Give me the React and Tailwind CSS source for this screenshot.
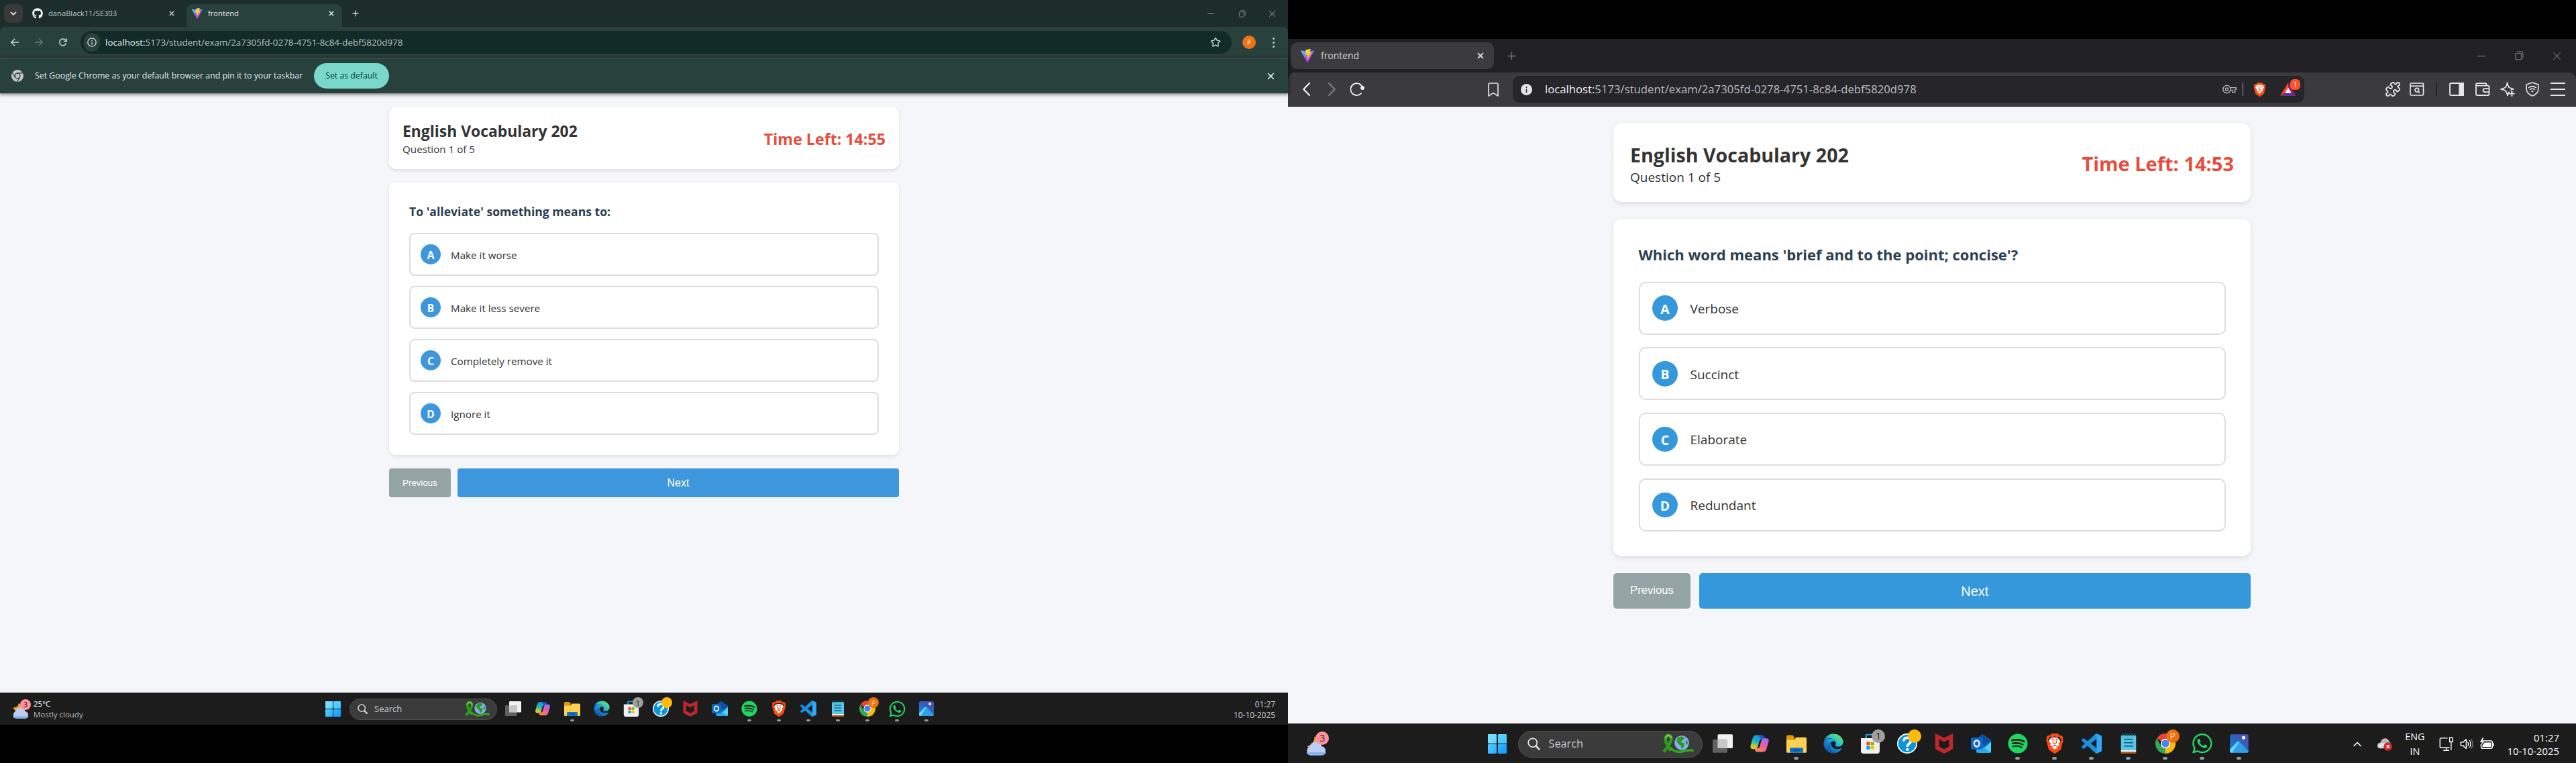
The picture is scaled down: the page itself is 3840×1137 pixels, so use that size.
import React from "react";
import { FaGithub, FaEdge, FaWhatsapp, FaSpotify } from "react-icons/fa";
import { SiBrave } from "react-icons/si";
import { Star, Puzzle, ChevronUp } from "lucide-react";

/* ---------- shared glyphs ---------- */

function Cross({ className = "", w = 1.6 }) {
  return (
    <svg viewBox="0 0 12 12" className={className} fill="none" stroke="currentColor" strokeWidth={w}>
      <path d="M1.2 1.2 10.8 10.8M10.8 1.2 1.2 10.8" />
    </svg>
  );
}

function Plus({ className = "", w = 1.6 }) {
  return (
    <svg viewBox="0 0 12 12" className={className} fill="none" stroke="currentColor" strokeWidth={w}>
      <path d="M6 0.5V11.5M0.5 6H11.5" />
    </svg>
  );
}

function Restore({ className = "" }) {
  return (
    <svg viewBox="0 0 12 12" className={className} fill="none" stroke="currentColor" strokeWidth="1">
      <rect x="1.5" y="3" width="7.5" height="8" rx="1" />
      <path d="M3.5 1H9.5Q11 1 11 2.5V9" />
    </svg>
  );
}

function ViteLogo({ className = "", id }) {
  return (
    <svg viewBox="0 0 256 257" className={className}>
      <defs>
        <linearGradient id={id + "a"} x1="-.828%" x2="57.636%" y1="7.652%" y2="78.411%">
          <stop offset="0%" stopColor="#41D1FF" />
          <stop offset="100%" stopColor="#BD34FE" />
        </linearGradient>
        <linearGradient id={id + "b"} x1="43.376%" x2="50.316%" y1="2.242%" y2="89.03%">
          <stop offset="0%" stopColor="#FFEA83" />
          <stop offset="8.333%" stopColor="#FFDD35" />
          <stop offset="100%" stopColor="#FFA800" />
        </linearGradient>
      </defs>
      <path fill={`url(#${id}a)`} d="M255.153 37.938L134.897 252.976c-2.483 4.44-8.862 4.466-11.382.048L.875 37.958c-2.746-4.814 1.371-10.646 6.827-9.67l120.385 21.517a6.537 6.537 0 0 0 2.322-.004l117.867-21.483c5.438-.991 9.574 4.796 6.877 9.62Z" />
      <path fill={`url(#${id}b)`} d="M185.432.063L96.44 17.501a3.268 3.268 0 0 0-2.634 3.014l-5.474 92.456a3.268 3.268 0 0 0 3.997 3.378l24.777-5.718c2.318-.535 4.413 1.507 3.936 3.838l-7.361 36.047c-.495 2.426 1.782 4.5 4.151 3.78l15.304-4.649c2.372-.72 4.652 1.36 4.15 3.788l-11.698 56.621c-.732 3.542 3.979 5.473 5.943 2.437l1.313-2.028l72.516-144.72c1.215-2.423-.88-5.186-3.54-4.672l-25.505 4.922c-2.396.462-4.435-1.77-3.759-4.114l16.646-57.705c.677-2.35-1.37-4.583-3.769-4.113Z" />
    </svg>
  );
}

function BraveLion({ className = "" }) {
  return (
    <span className={"relative block " + className}>
      <span className="absolute inset-x-[21%] top-[20%] bottom-[18%] rounded-[35%] bg-white" />
      <SiBrave className="relative block h-full w-full text-[#fb4a12]" />
    </span>
  );
}

/* ---------- Chrome window (left display) ---------- */

function ChromeTabs() {
  return (
    <div className="flex h-10 bg-[#1d2d2b] text-[#c3d0cd]">
      <div className="mt-1.5 ml-1.5 flex h-7 w-7 items-center justify-center rounded-lg bg-[#373a39] text-[#e3e3e3]">
        <svg viewBox="0 0 10 6" className="h-1.5 w-2.5" fill="none" stroke="currentColor" strokeWidth="1.9">
          <path d="M1 .8 5 4.8 9 .8" />
        </svg>
      </div>
      <div className="ml-3.5 flex h-10 w-[230px] items-center">
        <FaGithub className="h-4 w-4 text-white" />
        <span className="ml-2 w-[180px] text-[11.2px] whitespace-nowrap text-[#b9c8c5]">danaBlack11/SE303</span>
        <Cross className="h-2 w-2" w={2.2} />
      </div>
      <div className="mt-1.5 flex h-[34px] w-[232px] items-center rounded-t-[10px] bg-[#29413d] pb-1.5 text-[#e4eae9]">
        <ViteLogo id="vl" className="ml-2 h-4 w-4" />
        <span className="ml-2 w-[180px] text-[11.2px] whitespace-nowrap">frontend</span>
        <Cross className="h-2 w-2" w={2.2} />
      </div>
      <div className="ml-[15px] flex flex-1 items-center">
        <Plus className="h-2.5 w-2.5" w={1.8} />
      </div>
      <div className="flex items-center text-[#7f8a88]">
        <div className="h-px w-2.5 bg-[#7f8a88]" />
        <Restore className="ml-9 h-[11px] w-[11px]" />
        <Cross className="mr-[18px] ml-[34px] h-[11px] w-[11px]" w={1.1} />
      </div>
    </div>
  );
}

function ChromeToolbar() {
  return (
    <div className="bg-[#1d2d2b]">
      <div className="flex h-[46px] items-center rounded-t-lg bg-[#29413d] text-[#c3d6d2]">
        <svg viewBox="0 0 12 12" className="ml-4 h-3 w-3" fill="none" stroke="currentColor" strokeWidth="1.5">
          <path d="M12 6H1M6.2.7.9 6l5.3 5.3" />
        </svg>
        <svg viewBox="0 0 12 12" className="ml-6 h-3 w-3 text-[#667a76]" fill="none" stroke="currentColor" strokeWidth="1.5">
          <path d="M0 6H11M5.8.7 11.1 6l-5.3 5.3" />
        </svg>
        <svg viewBox="0 0 12 12" className="ml-6 h-3 w-3" fill="none" stroke="currentColor" strokeWidth="1.5">
          <path d="M10.6 7.2A5 5 0 1 1 9.7 2.8L11 4.4M11.2.2V4.6H6.8" />
        </svg>
        <div className="ml-5 flex h-[34px] w-[1716px] items-center rounded-full bg-[#122a28]">
          <div className="ml-[5px] flex h-7 w-6 items-center justify-center rounded-full bg-[#29413d]">
            <svg viewBox="0 0 14 14" className="h-3.5 w-3.5 text-[#d5dfdd]" fill="none" stroke="currentColor" strokeWidth="1.3">
              <circle cx="7" cy="7" r="6.2" />
              <path d="M7 6.2V10.4M7 3.6V5" />
            </svg>
          </div>
          <span className="ml-2 flex-1 text-[13.38px] whitespace-nowrap text-[#b7c5c2]">
            <span className="text-[#eef3f2]">localhost:</span>5173/student/exam/2a7305fd-0278-4751-8c84-debf5820d978
          </span>
          <Star className="mr-4 h-4 w-4 text-[#d0dcda]" strokeWidth={2} />
        </div>
        <div className="ml-4 flex h-5 w-5 items-center justify-center rounded-full bg-[#ee7216] text-[10px] text-white">P</div>
        <div className="ml-[25px] flex flex-col gap-[3px]">
          <i className="h-[3px] w-[3px] rounded-full bg-[#c3d6d2]" />
          <i className="h-[3px] w-[3px] rounded-full bg-[#c3d6d2]" />
          <i className="h-[3px] w-[3px] rounded-full bg-[#c3d6d2]" />
        </div>
      </div>
    </div>
  );
}

function ChromeInfobar() {
  return (
    <div className="relative flex h-[53px] items-center border-t border-[#4b5553] bg-[#29413d] shadow-[0_1px_5px_1px_rgba(0,0,0,0.5)]">
      <svg viewBox="0 0 18 18" className="ml-[17px] h-[18px] w-[18px]">
        <circle cx="9" cy="9" r="9" fill="#c6c9c8" />
        <circle cx="9" cy="9" r="3.9" fill="#c6c9c8" stroke="#29413d" strokeWidth="1.4" />
        <path d="M9 4.9H17.2M5.4 11 1.3 4M12.6 11 8.5 18" stroke="#29413d" strokeWidth="1.4" />
      </svg>
      <span className="ml-[17px] w-[416px] text-[12.35px] whitespace-nowrap text-[#e4eae9]">
        Set Google Chrome as your default browser and pin it to your taskbar
      </span>
      <div className="flex h-[38px] w-28 items-center justify-center rounded-full bg-[#79d8ca] text-[12.3px] whitespace-nowrap text-[#06403a]">
        Set as default
      </div>
      <Cross className="mr-5 ml-auto h-[11px] w-[11px] text-[#d5dfdd]" w={1.8} />
    </div>
  );
}

/* ---------- Brave window (right display) ---------- */

function BraveTabs() {
  return (
    <div className="flex h-[50px] items-center bg-[#202025]">
      <div className="ml-1 flex h-10 w-[303px] items-center rounded-[10px] bg-[#3b3a3f] text-[#d4d4d6]">
        <ViteLogo id="vr" className="ml-[15px] h-5 w-5" />
        <span className="ml-2.5 flex-1 text-[13.9px]">frontend</span>
        <Cross className="mr-[15px] h-2.5 w-2.5" w={2.2} />
      </div>
      <Plus className="ml-5 h-[13px] w-[13px] text-[#77777b]" w={1.2} />
      <div className="ml-auto h-px w-[13px] bg-[#8a8a8d]" />
      <Restore className="ml-[43px] h-[14px] w-[14px] text-[#77777b]" />
      <Cross className="mr-[22px] ml-[43px] h-[13px] w-[13px] text-[#6b6b6f]" w={1} />
    </div>
  );
}

function BraveToolbar() {
  return (
    <div className="bg-[#202025]">
      <div className="flex h-[51px] items-center rounded-t-[10px] border-b border-[#2b2a2f] bg-[#3b3a3f] text-[#e6e6e8]">
        <svg viewBox="0 0 11 20" className="ml-[22px] h-5 w-[11px]" fill="none" stroke="#fff" strokeWidth="1.9" strokeLinecap="round" strokeLinejoin="round">
          <path d="M10 1 1.2 10 10 19" />
        </svg>
        <svg viewBox="0 0 11 20" className="ml-[27px] h-5 w-[11px]" fill="none" stroke="#828186" strokeWidth="1.9" strokeLinecap="round" strokeLinejoin="round">
          <path d="M1 1 9.8 10 1 19" />
        </svg>
        <svg viewBox="0 0 22 20" className="ml-[21px] h-5 w-[22px]" fill="none" stroke="#f3f3f4" strokeWidth="1.8" strokeLinecap="round">
          <path d="M19 7.5A9 9 0 1 0 17 16.2" />
          <circle cx="19" cy="8" r="2" fill="#fff" />
        </svg>
        <svg viewBox="0 0 16 21" className="ml-[184px] h-[21px] w-4" fill="none" stroke="#dedee0" strokeWidth="1.7" strokeLinejoin="round">
          <path d="M1 3Q1 1 3 1H13Q15 1 15 3V20L8 15.5 1 20Z" />
        </svg>
        <div className="ml-[21px] flex h-10 w-[1180px] items-center rounded-[10px] bg-[#26252a]">
          <svg viewBox="0 0 17 17" className="ml-3 h-[17px] w-[17px]">
            <circle cx="8.5" cy="8.5" r="8.5" fill="#e4e4e6" />
            <path d="M8.5 7.5V13M8.5 4V6" stroke="#3b3a3f" strokeWidth="1.7" />
          </svg>
          <span className="ml-[19px] flex-1 text-[16.72px] whitespace-nowrap text-[#bdbdc1]">
            <span className="text-[#f2f2f3]">localhost:</span>5173/student/exam/2a7305fd-0278-4751-8c84-debf5820d978
          </span>
          <svg viewBox="0 0 21 14" className="h-3.5 w-[21px]" fill="none" stroke="#b9b9bd" strokeWidth="1.4">
            <circle cx="6.5" cy="7" r="5.6" />
            <circle cx="6.5" cy="7" r="2" />
            <path d="M11.6 4.6H20.2V7.6H18.6V11.6H15.2V8.6H12" />
          </svg>
          <div className="ml-[9px] h-5 w-px bg-[#a4a4a8]" />
          <BraveLion className="ml-[14px] h-[23px] w-[21px]" />
          <div className="relative mr-3 ml-5 h-5 w-6">
            <svg viewBox="0 0 24 20" className="h-5 w-6">
              <path d="M12 0 0 20 12 12Z" fill="#ff4724" />
              <path d="M12 0 24 20 12 12Z" fill="#9e1f63" />
              <path d="M0 20H24L12 12Z" fill="#662d91" />
              <path d="M12 7.5 16.8 15.6H7.2Z" fill="#fff" />
            </svg>
            <span className="absolute -top-[5px] left-[15px] flex h-4 w-[15px] items-center justify-center rounded-[6px] bg-[#fb542b] text-[10px] text-white">1</span>
          </div>
        </div>
        <Puzzle className="ml-[120px] h-6 w-6" strokeWidth={1.8} />
        <svg viewBox="0 0 22 20" className="ml-[13px] h-5 w-[22px]" fill="none" stroke="currentColor" strokeWidth="1.7">
          <rect x="1" y="1" width="19.5" height="18" rx="1.5" />
          <path d="M1 5.2H20.5" />
          <circle cx="10.8" cy="11.2" r="2.8" />
          <path d="M12.8 13.2 15 15.5" />
        </svg>
        <div className="ml-[17px] h-5 w-0.5 bg-[#202025]" />
        <svg viewBox="0 0 22 20" className="ml-[18px] h-5 w-[22px]" fill="none" stroke="currentColor" strokeWidth="1.8">
          <rect x="1" y="1" width="20" height="18" rx="1.5" />
          <path d="M15.2 1H21V19H15.2Z" fill="currentColor" />
        </svg>
        <svg viewBox="0 0 22 20" className="ml-[17px] h-5 w-[22px]" fill="none" stroke="currentColor" strokeWidth="1.8" strokeLinejoin="round">
          <path d="M16.5 4.2V3Q16.5 1.2 14.5 1.2H3Q1 1.2 1 3V17Q1 19 3 19H18.5Q20.5 19 20.5 17V6.2Q20.5 4.6 18.5 4.6H1" />
          <path d="M20.8 9.2H14Q11.6 9.2 11.6 11.6T14 14.2H20.8" />
        </svg>
        <svg viewBox="0 0 22 22" className="ml-[15px] h-[22px] w-[22px]" fill="none" stroke="currentColor" strokeWidth="1.7" strokeLinejoin="round" strokeLinecap="round">
          <path d="M13.2 15.2Q12 17 11 20.5 9.6 15 8 13.4 6 11.8 1 10.8 6 9.8 8 8.2 9.6 6.6 10.6 1.2 11.8 6.6 13.2 8.2 15 9.8 20 10.8 17.6 11.4 16.4 12" />
          <path d="M17.4 14.2V21M14 17.6H20.8" strokeWidth="2" />
        </svg>
        <svg viewBox="0 0 20 22" className="ml-4 h-[22px] w-5" fill="none" stroke="currentColor" strokeWidth="1.6" strokeLinejoin="round" strokeLinecap="round">
          <path d="M10 1 18.8 4V11Q18.8 17.5 10 21 1.2 17.5 1.2 11V4Z" />
          <path d="M4.6 8.6Q10 4.6 15.4 8.6M6.6 11.4Q10 9 13.4 11.4" />
          <circle cx="10" cy="14.2" r="1.3" fill="currentColor" stroke="none" />
        </svg>
        <div className="ml-[17px] flex w-[22px] flex-col gap-[7px]">
          <i className="h-0.5 bg-[#e6e6e8]" />
          <i className="h-0.5 bg-[#e6e6e8]" />
          <i className="h-0.5 bg-[#e6e6e8]" />
        </div>
      </div>
    </div>
  );
}

/* ---------- Exam page ---------- */

function Exam({ time, question, options, blue }) {
  return (
    <div className="mx-auto flex w-[760px] flex-col gap-5 pt-5 text-[#333]">
      <div className="flex h-[93.4px] items-center justify-between rounded-[10px] bg-white px-5 shadow-[0_2px_5px_rgba(0,0,0,0.1)]">
        <div className="pt-0.5">
          <h2 className="text-[22.9px] leading-8 font-bold whitespace-nowrap">English Vocabulary 202</h2>
          <p className="text-[15.2px] leading-[21px] whitespace-nowrap">Question 1 of 5</p>
        </div>
        <div className="pt-[3px] text-[23.2px] leading-8 font-bold whitespace-nowrap text-[#e74c3c]">Time Left: {time}</div>
      </div>
      <div className="rounded-[10px] bg-white p-[30px] shadow-[0_2px_5px_rgba(0,0,0,0.1)]">
        <h3 className="h-[45px] text-[17.6px] leading-[26px] font-bold whitespace-nowrap text-[#2c3e50]">{question}</h3>
        <div className="flex flex-col gap-[15px]">
          {options.map((text, i) => (
            <div key={text} className="flex items-center rounded-lg border-2 border-[#ddd] p-[15px]">
              <span className={"flex h-[30px] w-[30px] items-center justify-center rounded-full pt-0.5 text-[15.5px] leading-none font-bold text-white " + blue}>
                {"ABCD"[i]}
              </span>
              <span className="ml-[15px] pt-0.5 text-[15.2px] leading-none whitespace-nowrap">{text}</span>
            </div>
          ))}
        </div>
      </div>
      <div className="flex h-[42.4px] gap-2.5 font-['Liberation_Sans',sans-serif] text-white">
        <button className="w-[92px] rounded-[4px] bg-[#95a5a6] text-[13.33px]">Previous</button>
        <button className={"flex-1 rounded-[4px] text-base " + blue}>Next</button>
      </div>
    </div>
  );
}

/* ---------- Windows taskbar ---------- */

const Badge = ({ className, children }) => (
  <span className={"absolute flex h-4 w-4 items-center justify-center rounded-full text-[11px] leading-none " + className}>{children}</span>
);

function Weather({ night }) {
  return (
    <div className="relative h-7 w-7 shrink-0">
      <svg viewBox="0 0 28 28" className="h-7 w-7">
        <path d={night ? "M11 5Q11 14 2 17 5 20 13 19L15 8Z" : "M10 5 8 10 1 12 5 16 3 20 14 18 14 8Z"} fill="#f5a623" />
        <path d="M6 27.5A5.5 5.5 0 0 1 5 17.2 7.6 7.6 0 0 1 19.6 17 5.4 5.4 0 0 1 20 27.5Z" fill="#b9cdf5" />
        <path d="M6 27.5A5 5 0 0 1 1.2 24H24.6A5 5 0 0 1 20 27.5Z" fill="#8fb0ea" />
      </svg>
      <Badge className="-top-px left-[12px] bg-[#ff929a] text-[#3a1416]">3</Badge>
    </div>
  );
}

function WindowsLogo() {
  return (
    <div className="grid h-[23px] w-[23px] shrink-0 grid-cols-2 gap-px">
      <i className="rounded-[1px] bg-linear-to-br from-[#80e4ff] to-[#5bd3ff]" />
      <i className="rounded-[1px] bg-linear-to-br from-[#5ed8ff] to-[#3cc0ff]" />
      <i className="rounded-[1px] bg-linear-to-br from-[#52cdff] to-[#26adff]" />
      <i className="rounded-[1px] bg-linear-to-br from-[#36baff] to-[#0a93fb]" />
    </div>
  );
}

function SearchPill() {
  return (
    <div className="ml-[13px] flex h-8 w-[220px] shrink-0 items-center rounded-full border border-[#525252] bg-[#3b3b3b]">
      <svg viewBox="0 0 15 15" className="ml-[11px] h-[15px] w-[15px]" fill="none" stroke="#e2e2e2" strokeLinecap="round">
        <circle cx="6.2" cy="6.2" r="5.2" strokeWidth="1.4" />
        <path d="M10.2 10.2 14 14" strokeWidth="2" />
      </svg>
      <span className="ml-[10px] text-[13px] text-[#c9c9c9]">Search</span>
      <svg viewBox="0 0 40 23" className="mr-2 ml-auto h-[23px] w-10" fill="none">
        <path d="M11 20Q4 10 4.6 5 5.6 1.2 8 1.2T11.6 5Q11 12 2.4 21" stroke="#2c9d1c" strokeWidth="3.6" />
        <path d="M11.6 5Q10.6 1.4 8 1.4T4.6 5" stroke="#6cc83a" strokeWidth="2.4" />
        <path d="M10 16Q17 23 25 20.5T38 20" stroke="#33a51d" strokeWidth="3" />
        <circle cx="24" cy="10.3" r="8.6" fill="#86aef2" />
        <path d="M19.5 4Q24.5 1.5 27.5 4L25.5 7 22.5 8.5 24.5 10 27.5 11 26.5 15 24 18 22.9 14 19.5 11 17.5 8Z" fill="#2a9a20" />
        <path d="M28.5 7 31.5 9 30.5 13 28.9 11Z" fill="#2a9a20" />
      </svg>
    </div>
  );
}

function TaskIcons({ id }) {
  const cls = "h-6 w-6";
  const icons = [
    <svg viewBox="0 0 24 24" className={cls}>
      <rect x="6" y="1" width="18" height="16.5" rx="1.2" fill="#f1f1f1" />
      <rect x="0" y="7" width="17.5" height="16" rx="1.2" fill="#777" fillOpacity="0.75" />
      <rect x="6" y="7" width="11.5" height="10.5" fill="#c8c8c8" />
    </svg>,
    <svg viewBox="0 0 24 24" className={cls}>
      <defs>
        <linearGradient id={id + "c1"} x1="0.5" y1="0" x2="0.2" y2="1">
          <stop offset="0" stopColor="#1a8fe8" /><stop offset="0.45" stopColor="#1bb6c9" /><stop offset="0.75" stopColor="#9fcf45" /><stop offset="1" stopColor="#f9c21c" />
        </linearGradient>
        <linearGradient id={id + "c2"} x1="0.8" y1="0" x2="0.2" y2="1">
          <stop offset="0" stopColor="#9a6bff" /><stop offset="0.5" stopColor="#ef5c9c" /><stop offset="1" stopColor="#ff8c4a" />
        </linearGradient>
      </defs>
      <path d="M8 2H15Q17 2 17.6 4L18.3 6.5H15Q12.5 6.5 11.8 9L9.6 16.5Q9 18.5 7 18.5H4Q.5 18.5 1.2 14.5L3.6 6Q4.8 2 8 2Z" fill={`url(#${id}c1)`} />
      <path d="M11 2H15Q17 2 17.6 4L18.3 6.5H14Q12.5 6 11 2Z" fill="#1554c8" />
      <path d="M16 22H9.4Q7.2 22 6.6 20L6 17.8H9Q11.5 17.8 12.2 15.2L14.4 7.6Q15 5.8 17 5.8H20Q23.5 5.8 22.8 9.6L20.4 18Q19.2 22 16 22Z" fill={`url(#${id}c2)`} />
    </svg>,
    <svg viewBox="0 0 24 24" className={cls}>
      <path d="M0 4Q0 2 1.5 2H7.5L9.5 4.5V8H0Z" fill="#dd9a05" />
      <path d="M0 7.5 9.5 7.5 11.5 4.5H22.5Q24 4.5 24 6V21.5Q24 23 22.5 23H1.5Q0 23 0 21.5Z" fill="#fdd04f" />
      <path d="M4 23V18.5Q4 17 5.5 17H18.5Q20 17 20 18.5V23Z" fill="#1173c6" />
      <rect x="8" y="19.2" width="8" height="1.5" rx=".7" fill="#0a4d93" />
    </svg>,
    <FaEdge className={cls} fill={`url(#${id}edge)`} />,
    <svg viewBox="0 0 24 24" className={cls}>
      <path d="M7 6V2.2Q7 1.4 7.8 1.4H16.2Q17 1.4 17 2.2V6" fill="none" stroke="#1ea0ea" strokeWidth="1.7" />
      <path d="M.8 5.5H23.2V21Q23.2 24 20 24H4Q.8 24 .8 21Z" fill="#f0f0f0" />
      <path d="M7.5 10H11.5V14H7.5Z" fill="#f25022" /><path d="M12.5 10H16.5V14H12.5Z" fill="#7fba00" />
      <path d="M7.5 15H11.5V19H7.5Z" fill="#00a4ef" /><path d="M12.5 15H16.5V19H12.5Z" fill="#ffb900" />
    </svg>,
    <svg viewBox="0 0 24 24" className={cls}>
      <circle cx="12" cy="12" r="11.3" fill="#0a96d6" stroke="#fff" strokeWidth="1.4" />
      <path d="M7.8 9.2Q8 5 12 5T16.2 9Q16.2 11 14 12.4 12.2 13.6 12.2 16" fill="none" stroke="#fff" strokeWidth="2.8" />
      <circle cx="12.2" cy="19" r="1.7" fill="#fff" />
    </svg>,
    <svg viewBox="0 0 24 24" className={cls}>
      <path d="M1.5 0 12 5.2 22.5 0V18.5L12 24 1.5 18.5ZM6 7V15.6L12 18.8 18 15.6V7L12 10Z" fill="#c0262b" fillRule="evenodd" />
    </svg>,
    <svg viewBox="0 0 24 24" className={cls}>
      <path d="M4 8 14 1 24 8V21Q24 23 22 23H8Q6 23 6 21Z" fill="#0f6cbd" />
      <path d="M8 6 14 2 24 9 16 14Z" fill="#0b4fa0" />
      <path d="M24 10V21Q24 23 22 23H9L24 10Z" fill="#4fd2f7" />
      <path d="M8 12 24 23H8Q6.5 23 6.5 21Z" fill="#29a8ea" />
      <rect x="0" y="5" width="14" height="14" rx="1.4" fill="#1066c4" />
      <ellipse cx="7" cy="12" rx="3.1" ry="3.7" fill="none" stroke="#fff" strokeWidth="1.8" />
    </svg>,
    <FaSpotify className={cls} color="#1ed760" />,
    <BraveLion className={cls} />,
    <svg viewBox="0 0 24 24" className={cls}>
      <path fill="#1b8fe0" d="M23.15 2.587L18.21.21a1.494 1.494 0 0 0-1.705.29l-9.46 8.63-4.12-3.128a.999.999 0 0 0-1.276.057L.327 7.261A1 1 0 0 0 .326 8.74L3.899 12 .326 15.26a1 1 0 0 0 .001 1.479L1.65 17.94a.999.999 0 0 0 1.276.057l4.12-3.128 9.46 8.63a1.492 1.492 0 0 0 1.704.29l4.942-2.377A1.5 1.5 0 0 0 24 20.06V3.939a1.5 1.5 0 0 0-.85-1.352zm-5.146 14.861L10.826 12l7.178-5.448v10.896z" />
      <path fill="#2fa9f4" d="M18 .2 23.2 2.6Q24 3 24 4V20Q24 21 23.2 21.4L18 23.8Z" />
    </svg>,
    <svg viewBox="0 0 24 24" className={cls}>
      <rect x="3" y="2" width="18" height="19" rx="1.2" fill="#5cc6e4" />
      <path d="M3 20H21V24H3Z" fill="#a8551c" /><path d="M3 20H21V21.8H3Z" fill="#f3f3f3" />
      <path d="M5 0V3.4M7.8 0V3.4M10.6 0V3.4M13.4 0V3.4M16.2 0V3.4M19 0V3.4" stroke="#10607e" strokeWidth="1.3" />
      <path d="M6.5 7H17.5M6.5 11H17.5M6.5 15H17.5" stroke="#0e6f93" strokeWidth="1.6" />
    </svg>,
    <svg viewBox="0 0 24 24" className={cls}>
      <path d="M12 12 1.6 6A12 12 0 0 1 22.4 6Z" fill="#ea4335" />
      <path d="M12 12 22.4 6A12 12 0 0 1 12 24Z" fill="#fbbc05" />
      <path d="M12 12 12 24A12 12 0 0 1 1.6 6L6.8 15Z" fill="#34a853" />
      <path d="M12 6.5H22.6L17 15 12 24 16.8 15Z" fill="#fbbc05" />
      <circle cx="12" cy="12" r="5.7" fill="#fff" /><circle cx="12" cy="12" r="4.6" fill="#4285f4" />
    </svg>,
    <FaWhatsapp className="h-[27px] w-[27px] shrink-0" color="#25d366" />,
    <svg viewBox="0 0 24 24" className={cls}>
      <defs>
        <linearGradient id={id + "ph"} x1="0" y1="1" x2="1" y2="0"><stop offset="0" stopColor="#1b88dd" /><stop offset="0.5" stopColor="#2a63c0" /><stop offset="1" stopColor="#5a4bb0" /></linearGradient>
      </defs>
      <rect x="1" y="1" width="22" height="22" rx="2" fill={`url(#${id}ph)`} />
      <path d="M1 19 9 10.5Q11 8.6 13 10.5L23 21V21Q23 23 21 23H3Q1 23 1 21Z" fill="#2f9fe8" />
      <path d="M1 19 9 10.5Q10.5 9 12 10L3.5 23Q1 23 1 21Z" fill="#5fdcff" />
      <circle cx="17.2" cy="5" r="2" fill="#fff" />
    </svg>,
  ];
  const badges = {
    4: <Badge className="-top-[5px] left-[14px] bg-[#a09f9c] text-[#222]">1</Badge>,
    5: <Badge className="-top-[5px] left-[13px] bg-[#ffbb0c]" />,
    12: <Badge className="-top-[5px] left-[13px] bg-[#ee7008] text-[9px] text-[#ffd9b8]">P</Badge>,
  };
  const running = [2, 8, 9, 10, 11, 12, 13, 14];
  return (
    <div className="ml-0.5 flex shrink-0">
      <svg className="h-0 w-0">
        <defs>
          <linearGradient id={id + "edge"} x1="0.9" y1="0.2" x2="0.3" y2="1">
            <stop offset="0" stopColor="#5fe06a" /><stop offset="0.3" stopColor="#2cc3d2" /><stop offset="0.6" stopColor="#1488d8" /><stop offset="1" stopColor="#0c59a4" />
          </linearGradient>
        </defs>
      </svg>
      {icons.map((icon, i) => (
        <div key={i} className="flex h-[47px] w-11 flex-col items-center justify-between pt-[11px] pb-[5px]">
          <div className="relative flex h-6 w-6 items-center justify-center">
            {icon}
            {badges[i]}
          </div>
          <i className={running.includes(i) ? "h-[3px] w-1.5 rounded-full bg-[#9a9a9a]" : "h-[3px] w-1.5"} />
        </div>
      ))}
    </div>
  );
}

function Clock({ className = "" }) {
  return (
    <div className={"flex flex-col items-end text-[11.9px] leading-4 whitespace-nowrap " + className}>
      <span>01:27</span>
      <span>10-10-2025</span>
    </div>
  );
}

function Taskbar({ id, widget, tray }) {
  return (
    <div className="flex h-12 w-full items-center border-t border-[#414141] bg-[#1c1c1c]">
      {widget}
      <WindowsLogo />
      <SearchPill />
      <TaskIcons id={id} />
      {tray}
    </div>
  );
}

function Tray() {
  return (
    <div className="ml-auto flex items-center pr-5 text-white">
      <ChevronUp className="h-4 w-4" strokeWidth={2} />
      <svg viewBox="0 0 18 16" className="ml-4 h-4 w-[18px]">
        <path d="M4 13Q0 13 0 9.6T3.6 6Q5 1 9 1T14 5Q16 6 16 9V13Z" fill="#b9b9b9" />
        <path d="M0 10Q4 4 10 8L5 13H4Q1 13 0 10Z" fill="#e2e2e2" />
        <circle cx="12.6" cy="10.8" r="5" fill="#d9232e" />
        <path d="M10.8 9 14.4 12.6M14.4 9 10.8 12.6" stroke="#fff" strokeWidth="1.3" />
      </svg>
      <div className="ml-[11px] w-8 text-center text-[11.5px] leading-[17px]">ENG<br />IN</div>
      <svg viewBox="0 0 17 17" className="ml-[13px] h-[17px] w-[17px]" fill="none" stroke="currentColor" strokeWidth="1.1">
        <path d="M10 1.5H2Q1 1.5 1 2.5V12Q1 13 2 13H12.5M5 16.2H12M8.5 13V16" />
        <path d="M12.5 1H16V6H12.5ZM14.3 6V16" />
      </svg>
      <svg viewBox="0 0 17 17" className="ml-[8px] h-[17px] w-[17px]" fill="none" stroke="currentColor" strokeWidth="1.1" strokeLinejoin="round" strokeLinecap="round">
        <path d="M1 6.5H3.5L7.5 3V14L3.5 10.5H1Z" />
        <path d="M9.6 6.5Q10.8 8.5 9.6 10.5M11.6 4.6Q14 8.5 11.6 12.4" />
        <path d="M13.6 3Q17 8.5 13.6 14" stroke="#777" />
      </svg>
      <svg viewBox="0 0 18 16" className="ml-[6px] h-4 w-[18px]">
        <path d="M4 4H13.5Q15.5 4 15.5 6V11Q15.5 13 13.5 13H4Q2 13 2 11V8" fill="none" stroke="#fff" strokeWidth="1.2" />
        <path d="M6 6H13.8V11.2H3.6V9.4Z" fill="#fff" />
        <path d="M16 6.8H17.4V10.2H16Z" fill="#fff" />
        <path d="M4 0 .6 5.4H3L2 9.4 6 4H3.6L5 .2Z" fill="#fff" />
      </svg>
      <Clock className="ml-[15px]" />
    </div>
  );
}

/* ---------- Two displays side by side ---------- */

export default function App() {
  return (
    <div className="flex h-[1137px] w-[3840px] overflow-hidden bg-black font-['Open_Sans',sans-serif]">
      <div className="flex h-[1080px] w-[1920px] flex-col">
        <ChromeTabs />
        <ChromeToolbar />
        <ChromeInfobar />
        <div className="flex-1 bg-[#f5f6fa]">
          <Exam
            time="14:55"
            blue="bg-[#3e97dc]"
            question="To 'alleviate' something means to:"
            options={["Make it worse", "Make it less severe", "Completely remove it", "Ignore it"]}
          />
        </div>
        <Taskbar
          id="tl"
          widget={
            <div className="flex w-[485px] shrink-0 items-center pl-[18px]">
              <Weather />
              <div className="ml-1 flex flex-col text-[11.5px] leading-4 text-white">
                <span>25°C</span>
                <span className="text-[#b9b9b9]">Mostly cloudy</span>
              </div>
            </div>
          }
          tray={<Clock className="mr-[19px] ml-auto text-[#d0d0d0]" />}
        />
      </div>
      <div className="flex h-[1138px] w-[1920px] flex-col pt-[58px]">
        <BraveTabs />
        <BraveToolbar />
        <div className="flex-1 bg-[#f5f6fa]">
          <div className="[zoom:1.25]">
            <Exam
              time="14:53"
              blue="bg-[#3498db]"
              question="Which word means 'brief and to the point; concise'?"
              options={["Verbose", "Succinct", "Elaborate", "Redundant"]}
            />
          </div>
        </div>
        <div className="[zoom:1.25]">
          <Taskbar
            id="tr"
            widget={
              <div className="w-[238px] shrink-0 pl-[21px]">
                <Weather night />
              </div>
            }
            tray={<Tray />}
          />
        </div>
      </div>
    </div>
  );
}
